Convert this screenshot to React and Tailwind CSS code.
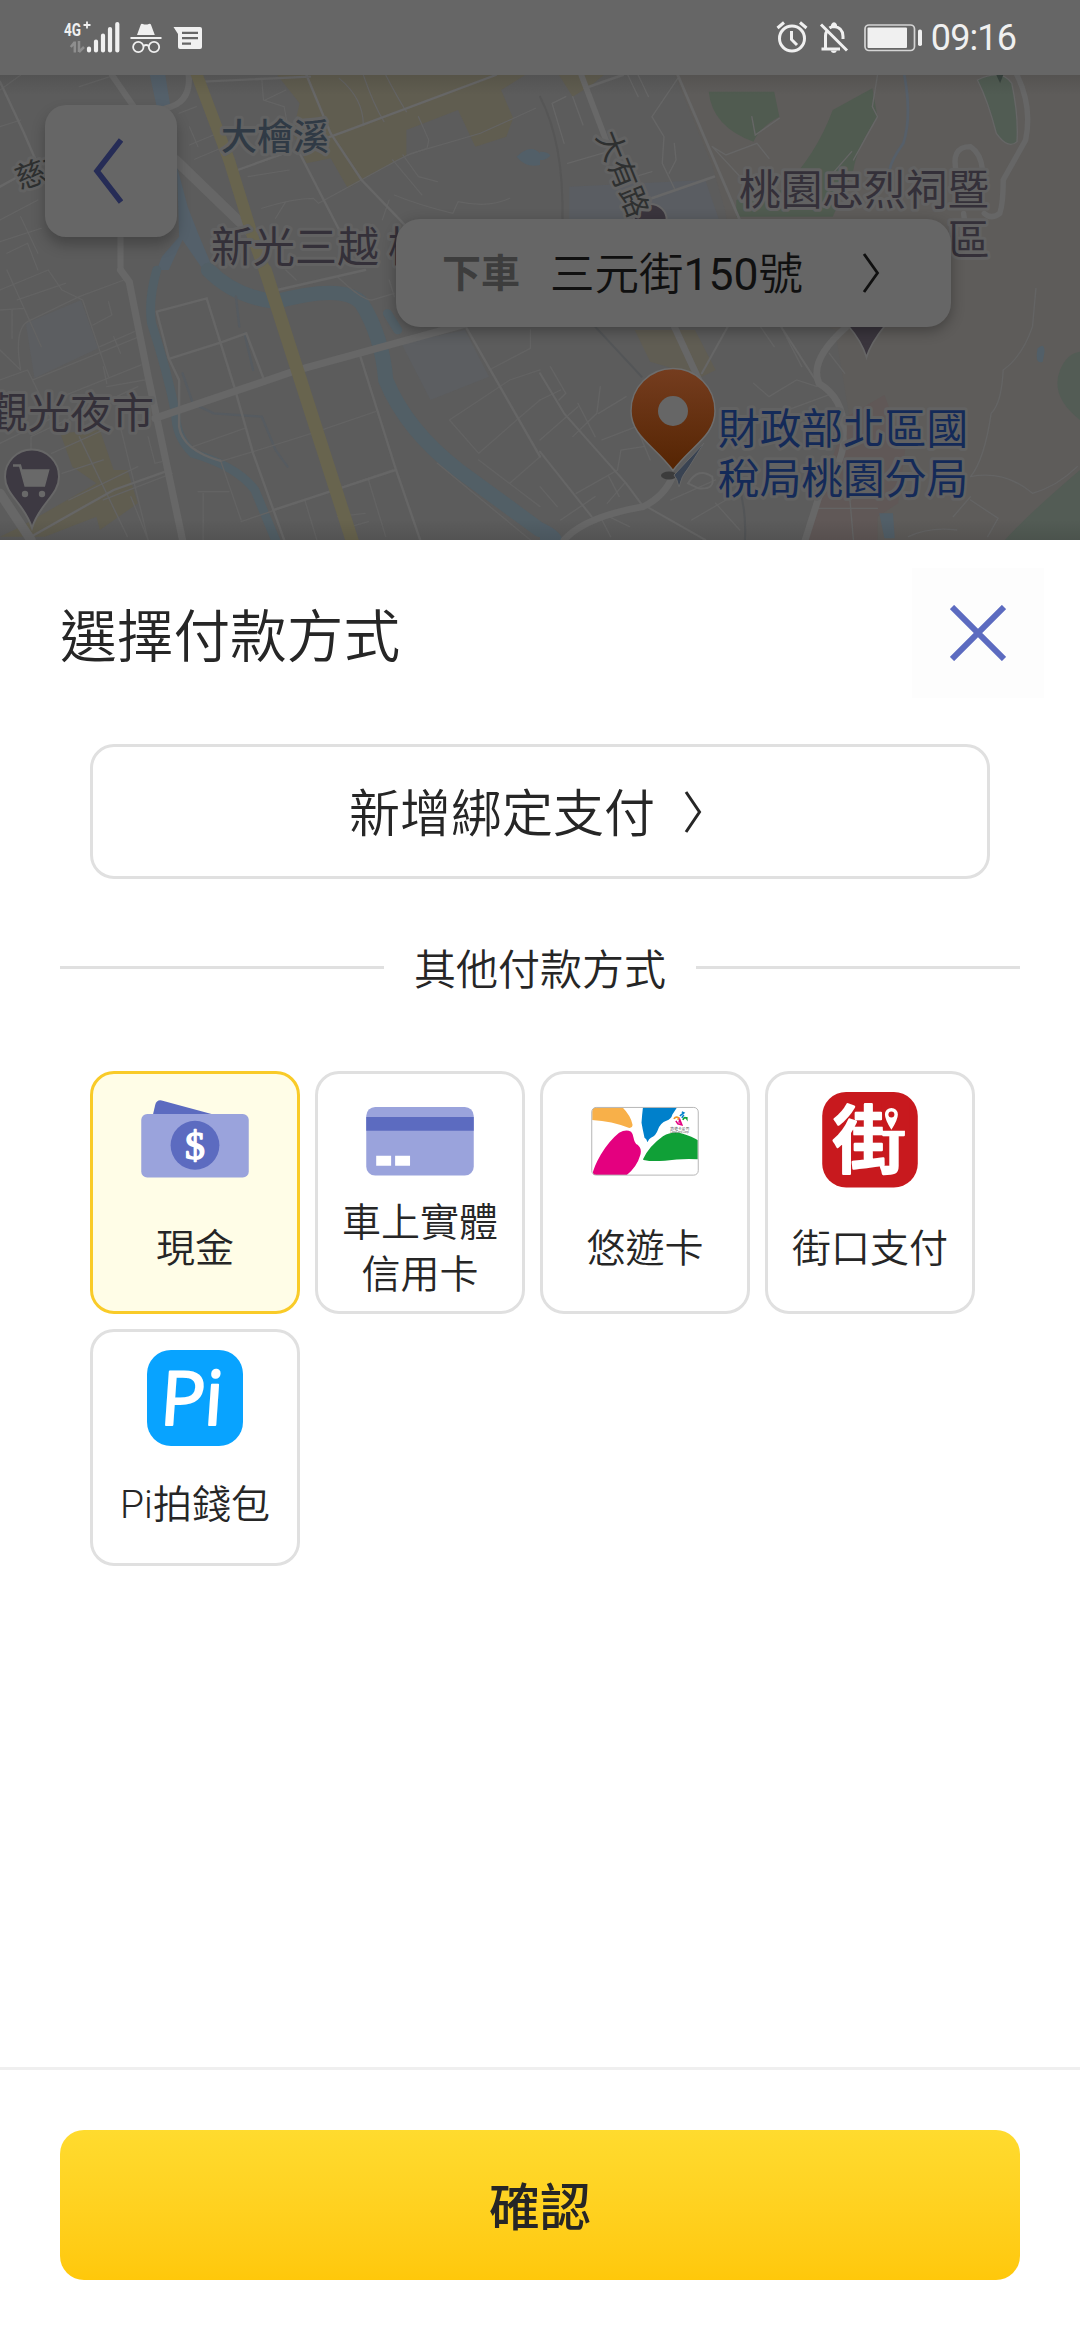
import React from "react";

const FONT = "font-['Roboto','Noto_Sans_CJK_TC',sans-serif]";

function StatusBar() {
    return (
        <div className="flex h-[75px] items-center justify-between bg-[#666666] pr-[64px] pl-[62px] text-[#f0f0f0]">
            <svg width="142" height="75" viewBox="62 0 142 75">
                <text x="64" y="35.5" fontSize="19" fontWeight="700" textLength="17" lengthAdjust="spacingAndGlyphs" fill="#f0f0f0">4G</text>
                <path d="M83.5 25h7M87 21.5v7" stroke="#f0f0f0" strokeWidth="1.8" />
                <path d="M74.800 41.500v11M74.800 42l-4 5M79 41v11M79 52l5-5" fill="none" stroke="#8e8e8e" strokeWidth="2.500" />
                <path d="M89 48.500v2M96 41.500v9M103 35.500v15M110 29v21.500M117.300 24v26.500" stroke="#f0f0f0" strokeWidth="4.200" strokeLinecap="round" />
                {/* Incógnito */}
                <path d="M137 35l3.800-10.500q.6-1.200 2-.6 3 1 6 0 1.500-.6 2.100.6L154.800 35z" fill="#f0f0f0" />
                <path d="M130.500 38h31" stroke="#f0f0f0" strokeWidth="2" />
                <g fill="none" stroke="#f0f0f0" strokeWidth="1.800">
                    <circle cx="138.300" cy="47" r="5.200" />
                    <circle cx="154" cy="47" r="5.200" />
                    <path d="M143.500 46q2.600-2 5.200 0" />
                </g>
                {/* Mensaje */}
                <path d="M173.500 27H200q2 0 2 2v18q0 2-2 2h-20q-2 0-2-2V34z" fill="#f0f0f0" />
                <path d="M182 32.800h16M182 38.200h16M182 43.600h9" stroke="#666" strokeWidth="2.200" />
            </svg>
            <div className="flex items-center">
                <svg width="148" height="75" viewBox="776 0 148 75">
                    <g fill="none" stroke="#f0f0f0" strokeWidth="3">
                        <circle cx="792" cy="38.500" r="12.500" />
                        <path d="M791.500 31v8.500l5.500 5.500M777.500 28l6.500-5.500M806.500 28l-6.500-5.500" />
                        <path d="M821 24.500l26 26M821.500 49H840M825.500 48V36q0-3 1.500-5M829.500 28q2-1.500 4.500-1.500 9 1 9 10v2.500" />
                    </g>
                    <path d="M831 27.500v-3q3-4.500 6 0v3z" fill="#f0f0f0" />
                    <path d="M830.500 50.500h6.500q-1 2.500-3.200 2.500t-3.300-2.500z" fill="#f0f0f0" />
                    <rect x="865" y="25" width="49.500" height="25.500" rx="4" fill="none" stroke="#d4d4d4" strokeWidth="1.700" />
                    <rect x="867.500" y="27.500" width="39.500" height="20.500" rx="1" fill="#f0f0f0" />
                    <rect x="918" y="29.500" width="4" height="16.500" rx="1.800" fill="#f0f0f0" />
                </svg>
                <span className="ml-[7px] pt-[1px] text-[36px] leading-none font-normal tracking-[-0.9px]">09:16</span>
            </div>
        </div>
    );
}

const halo = { paintOrder: "stroke", strokeLinejoin: "round" };

function MapView() {
    return (
        <svg width="1080" height="465" viewBox="0 75 1080 465" className="block">
            <defs>
                <linearGradient id="pin" x1="0" y1="0" x2="0" y2="1">
                    <stop offset="0" stopColor="#753d1f" />
                    <stop offset="1" stopColor="#552402" />
                </linearGradient>
                <linearGradient id="fade" x1="0" y1="0" x2="0" y2="1">
                    <stop offset="0" stopColor="#000" stopOpacity="0.1" />
                    <stop offset="1" stopColor="#000" stopOpacity="0" />
                </linearGradient>
            </defs>
            <rect y="75" width="1080" height="465" fill="#5c5c5c" />
            {/* Zona montañosa */}
            <path d="M675 75H1080V540H805L850 420 835 330 740 290 725 210 712 165z" fill="#5e5c5a" />

            {/* Cuadrante superior izquierdo */}
            <g transform="scale(.3444 .3333)" fill="none" strokeLinecap="round">
                <path d="M805 225H1525L1455 270 1490 355 1470 410 1380 440 1330 330 1180 390 1180 465 1010 565 960 475 890 490 850 400 870 310z" fill="#605d50" />
                <path d="M435 225H480L495 320H455zM514 500L545 620 575 700 620 810H590L530 720 490 810H455L470 770 520 710z" fill="#54606a" />
                <path d="M1500 470q40-40 68-10v35q-40 10-68-25z" fill="#525f68" />
                <g stroke="#646464" strokeWidth="3.500">
                    <path d="M1120 225q35 70 60 110M1055 225q30 90 60 140M985 235q70 60 70 140M760 235l5 65 60 20 10 55M770 300l60-30M520 340l50-20M550 435l70-30M550 380l25 60M565 478l110-48M1170 465l45 65 55 15M1140 480l85 105M1215 350l30 70-5 25-60 22" />
                    <path d="M0 380L60 360M230 260l90-30M0 270L60 225M0 660l110-60M0 725l120-40M60 650l50 110M20 760l60-30 30 80M690 510l140-50M720 530l120-20M760 625q90-30 150-30l15 15 230-130 40-20 200-60 160-75M1145 585q70 30 170 55l15-35q90 20 150-10M800 655l30-50M1110 660l20-60" />
                </g>
                <path d="M0 245L70 400 120 520M0 560L70 520M590 245L900 230M690 510L1000 395 1440 225M890 225L960 400 1050 540 1180 680M865 450L985 690" stroke="#676767" strokeWidth="7" />
                <path d="M325 225L395 330M548 225Q555 310 480 325M350 700V810" stroke="#676767" strokeWidth="18" />
                <path d="M510 480L730 700" stroke="#666666" strokeWidth="30" />
                <path d="M570 220L665 480 740 730 775 830" stroke="#68644e" strokeWidth="34" />
            </g>

            {/* Cuadrante superior derecho */}
            <g transform="translate(540 0) scale(.3444 .3333)" fill="none" strokeLinecap="round">
                <path d="M55 225H185L150 255 95 290z" fill="#605d50" />
                <path d="M85 560L480 540 520 660H85z" fill="#5a5d62" />
                <path d="M490 275Q600 275 680 275L695 350Q640 380 620 425 500 380 490 275zM965 265L980 350Q920 440 910 510L850 650H570V600L700 570Q800 470 850 330z" fill="#505b50" />
                <path d="M1270 240Q1340 205 1370 250 1390 350 1385 425 1360 450 1325 400 1300 300 1270 240z" fill="#515c53" stroke="#666" strokeWidth="4" />
                <path d="M0 455q25 0 30 12-15 15-30 13z" fill="#525f68" />
                <path d="M1058 225Q1080 350 1055 430 1020 480 1015 510" stroke="#565f69" strokeWidth="8" />
                <g stroke="#666666" strokeWidth="4">
                    <path d="M35 310l40-20M35 310l35 120M95 290l30 85M255 225l30 65M285 225l30 65M400 235L325 350 360 410 355 490 390 565M390 430l5 50-20 40M80 490l150-45M245 540l80-25M500 440l40 25 90-35 35 45M695 355l-70 50-10-55M980 225L965 320 980 350 910 480M905 455L850 520M500 440L590 540" />
                </g>
                <path d="M0 290Q70 430 65 660" stroke="#565656" strokeWidth="6" />
                <path d="M400 225L580 660M130 265L240 225M310 600L505 530" stroke="#676767" strokeWidth="8" />
                <path d="M120 225L195 430" stroke="#686868" strokeWidth="17" />
                <path d="M1385 225Q1430 320 1410 420L1345 540Q1345 610 1335 640 1310 660 1290 640M1210 520Q1190 440 1250 440 1280 460 1285 510M1230 640L1235 680" stroke="#666" strokeWidth="16" />
                <path d="M1325 225h20l-9 25z" fill="#39443f" />
                <circle cx="320" cy="660" r="48" fill="#3a353d" stroke="#666" strokeWidth="6" />
            </g>

            {/* Cuadrante inferior izquierdo */}
            <g transform="translate(0 270) scale(.3444 .3333)" fill="none" strokeLinecap="round">
                <path d="M75 160L235 90 285 235 100 325zM1165 220L1350 180 1420 320 1250 390z" fill="#5c5e61" />
                <path d="M175 490L290 480 330 600 370 600 400 700 290 780 280 740 130 800H0L60 770 280 640 210 590z" fill="#605d50" />
                <g stroke="#525f66">
                    <path d="M455 0Q430 90 440 160 485 300 510 430 510 500 560 550 690 590 740 660L800 810" strokeWidth="26" />
                    <path d="M605 0Q680 80 800 95 1000 40 1050 100 1110 200 1120 330 1180 480 1330 600L1568 780" strokeWidth="44" />
                    <path d="M1125 130l30 50" strokeWidth="26" />
                    <path d="M685 80L695 170M710 190L735 300M530 310L560 400 620 430 760 440 800 540 835 590" stroke="#565b60" strokeWidth="7" />
                </g>
                <g stroke="#636363" strokeWidth="4">
                    <path d="M0 60L140 0M20 0L120 230M140 0L180 60 240 90 315 320M50 90L190 40M0 120l70-5M35 120v85M60 300Q40 180 80 155L230 80 360 30M270 165l55-30-10-40M290 230L390 185M330 200l20 50M95 330l310-130M0 240l60 60M0 330l80-30L170 490M180 380l230-95M300 290l10 50M0 520L180 430M90 550V500L400 350M310 350l110-20M340 430l90 380M430 500l20 80 20-5M150 550L300 480M230 500L370 800M180 610l120-40M200 690l200-100M300 690l200-80M380 680L430 810M560 530L710 475M645 573L735 545 905 490 1090 425M640 570L700 750M575 665H665M590 670V810M700 755L1140 600M885 690L920 810M1070 630L1120 800M980 740l80-10M1000 775l70-20" />
                    <path d="M830 0l30 30M980 20Q1050 90 1080 90L1145 70M1130 30l15 50M1305 450L1480 330 1568 300M1305 450L1390 550 1500 450 1568 390M1390 570L1568 710M1480 640L1568 560M1420 300L1540 235V180M1270 580L1540 810" />
                </g>
                <path d="M495 265L640 218 715 190 765 325M455 125L600 85 680 350 735 550 825 810M455 125L490 265 520 330V470Q530 540 640 573M1045 255L1150 600 1220 810M795 720L1150 600M805 60L1060 0M1355 175L1568 560M90 800L330 660 480 605" stroke="#666666" strokeWidth="7" />
                <path d="M350 0L375 35 430 320 530 810" stroke="#676767" strokeWidth="21" />
                <path d="M450 445L850 305M865 300L1360 160" stroke="#676767" strokeWidth="22" />
                <path d="M0 670L90 810" stroke="#676767" strokeWidth="28" />
                <path d="M770 0L1025 820" stroke="#68644e" strokeWidth="38" />
            </g>

            {/* Cuadrante inferior derecho */}
            <g transform="translate(540 270) scale(.3444 .3333)" fill="none" strokeLinecap="round">
                <path d="M275 180H450L510 300 470 320 320 275z" fill="#605d53" />
                <path d="M890 440L1000 375 1060 540 1040 700 980 740V810H770L850 560z" fill="#605857" />
                <path d="M1568 245V450Q1480 380 1510 300 1530 250 1568 245zM1350 810Q1420 730 1568 600V810z" fill="#535c55" />
                <path d="M0 755Q60 780 65 810H0zM985 730h40l5 75h-30zM1445 235q20-20 20 10l-5 30q-25 10-15-40z" fill="#525f68" />
                <g stroke="#646464" strokeWidth="4">
                    <path d="M0 390l60-30M30 290l45 80-20 20M0 510l110-100M110 400l50 100M175 350l-10 80-70 70M180 510l100-40 40 100M250 380l-80 50M300 530l-65 10-10 60-120 70M60 750L160 680M195 700L245 640M200 620l30 60M0 650L50 710M260 770L200 740M175 740l30 60M440 750l100-60M380 690l130-60M510 700l70 80M700 170L760 290M640 170l40 60M620 340l45 40 80-50 60 20M720 420l130-50M840 250l45 60M1440 55L1430 170Q1400 260 1345 300 1340 400 1310 430 1290 570 1250 620M1250 620Q1350 600 1430 670 1500 650 1560 590M1250 690L1330 745 1300 800M1200 740l50-60M1070 800q60-30 140-20M800 715h180M900 690l10 120" />
                </g>
                <path d="M160 170L295 320M575 640Q600 720 595 810" stroke="#535557" strokeWidth="6" />
                <path d="M0 310L70 430 250 640 300 710M0 545L150 740M545 170L470 310M310 710L480 810M700 170L800 330M430 640q30-50 70-20 10 40-40 35z" stroke="#666666" strokeWidth="6" />
                <path d="M390 170L475 360M70 810Q130 740 300 710 360 680 385 620M890 170Q780 270 810 340 890 390 880 500 890 560 810 680L770 810" stroke="#676767" strokeWidth="20" />
                <path d="M893 165h110Q960 220 948 262 935 215 893 165z" fill="#3a353d" stroke="#666" strokeWidth="5" />
            </g>

            {/* Etiquetas */}
            <g stroke="#626262" strokeWidth="6" fill="#343039" fontWeight="400">
                <text x="221" y="150" fontSize="36" fontWeight="500" fill="#303a45" style={halo}>大檜溪</text>
                <text x="211" y="262" fontSize="42" style={halo}>新光三越</text>
                <text x="388" y="262" fontSize="42" style={halo}>桃</text>
                <text x="739" y="205" fontSize="41.700" style={halo}>桃園忠烈祠暨</text>
                <text x="948" y="255" fontSize="41.700" style={halo}>區</text>
                <text x="-14" y="428" fontSize="42" style={halo}>觀光夜市</text>
                <g fill="#142a58">
                    <text x="718" y="444" fontSize="41.700" style={halo}>財政部北區國</text>
                    <text x="718" y="494" fontSize="41.700" style={halo}>稅局桃園分局</text>
                </g>
                <g fill="#2e3030" fontSize="30">
                    <text transform="translate(20 190) rotate(-20)" style={halo}>慈文</text>
                    <text transform="translate(596 136) rotate(68)" style={halo}>大有路</text>
                </g>
            </g>

            {/* Marcador del mercado */}
            <path d="M32 449.500a27 27 0 0 1 27 27.500c0 18-20 27-27 51-7-24-27-33-27-51a27 27 0 0 1 27-27.500z" fill="#3d3942" stroke="#676767" strokeWidth="2" />
            <path d="M13 465.500h7l5.500 20h18.500l4-15H21.500M27 484.500h17" fill="none" stroke="#696969" strokeWidth="2.500" />
            <path d="M21 470h27l-3.500 15h-19z" fill="#696969" />
            <circle cx="25" cy="494" r="3.200" fill="#696969" />
            <circle cx="42" cy="494" r="3.200" fill="#696969" />

            {/* Destino */}
            <ellipse cx="669" cy="475.500" rx="8" ry="4" fill="#3c3c3c" />
            <path d="M704 443l-15 24q-8 9-10 20-2-9-5-12z" fill="#394352" stroke="#666" strokeWidth="1" />
            <path d="M673 368.500a42 42 0 0 1 42 42.500c0 25-24 35-42 59.500-18-24.500-42-34.500-42-59.500a42 42 0 0 1 42-42.500z" fill="url(#pin)" stroke="#6d6d6d" strokeWidth="1.500" />
            <circle cx="673" cy="411" r="15" fill="#666" />
            <rect y="75" width="1080" height="20" fill="url(#fade)" />
            <rect y="-540" width="1080" height="20" fill="url(#fade)" transform="scale(1 -1)" />
        </svg>
    );
}

function MapHeader() {
    return (
        <div className="relative h-[465px] overflow-hidden">
            <MapView />
            <button className="absolute top-[30px] left-[45px] flex h-[132px] w-[132px] items-center justify-center rounded-[21px] bg-[#666666] shadow-[0_8px_14px_rgba(0,0,0,0.25)]">
                <svg width="30" height="66" viewBox="0 0 30 66" className="-ml-[6px]">
                    <path d="M28 2L4 33l24 31" fill="none" stroke="#262c56" strokeWidth="5.500" />
                </svg>
            </button>
            <div className="absolute top-[144px] left-[396px] flex h-[108px] w-[555px] items-center rounded-3xl bg-[#666666] pl-[46px] shadow-[0_4px_14px_rgba(0,0,0,0.3)]">
                <span className="w-[108px] pt-[2px] text-[39px] font-bold leading-none text-[#3d3d3d]">下車</span>
                <span className="w-[312px] pt-[4px] text-[44.5px] leading-none text-[#101010]">
                    三元街<span className="font-normal">150</span>號
                </span>
                <svg width="18" height="40" viewBox="0 0 18 40">
                    <path d="M2 1l13.500 19L2 39" fill="none" stroke="#101010" strokeWidth="2.800" />
                </svg>
            </div>
        </div>
    );
}

function CashIcon() {
    return (
        <svg width="108" height="96" viewBox="0 0 108 96">
            <path d="M11 26l3-13q1.500-5.500 6.500-4.500L78 24z" fill="#5c6bc0" />
            <rect y="22" width="108" height="64" rx="6" fill="#9aa3dc" />
            <circle cx="54" cy="53.500" r="24.500" fill="#5c6bc0" />
            <text x="54" y="67" textAnchor="middle" fontSize="40" fontWeight="400" fill="#fff" stroke="#fff" strokeWidth="1.500" strokeLinejoin="round" className="font-['Liberation_Serif',serif]">$</text>
        </svg>
    );
}

function CardIcon() {
    return (
        <svg width="108" height="96" viewBox="0 0 108 96">
            <rect y="15" width="108" height="69" rx="9" fill="#9aa3dc" />
            <path d="M0 25h108v14H0z" fill="#5c6bc0" />
            <path d="M10 64h15v10H10zM29 64h15v10H29z" fill="#fff" />
        </svg>
    );
}

function EasyCardIcon() {
    return (
        <svg width="108" height="96" viewBox="0 0 108 96">
            <clipPath id="easy">
                <rect x="1" y="15.500" width="106" height="68" rx="4" />
            </clipPath>
            <g clipPath="url(#easy)">
                <path d="M0 15h31q9 9 10.500 18 0 3.500-4 3Q21 29 0 28z" fill="#f8b049" />
                <path d="M52 15h34.500l-5 7.500q-1 4.500-6 6.500-6 2-8.500 9-2 6-7 8-2 1-3.500 4.500-1-3.500-3-4.500-2-9-3-15 .5-8 1.500-16z" fill="#0080cb" />
                <path d="M1 84q1-8 8.500-21Q18 49 28 41q7-4 12-1 2 2 2.500 6 1 6 4 7 5 4 2.500 11Q46 75 35 84z" fill="#e4007f" />
                <path d="M52 67.500q6-13 20-23 10-6 20-2.500 10 3 16 7v18.500q-18-1-34 1.500-14 1-20-.5-2 0-2-1z" fill="#10a037" />
                <g fill="none" strokeWidth="1.600">
                    <path d="M83 27q2-3 5-1l-1 2" stroke="#f0962c" />
                    <path d="M89 24l4-3-2-1M91 26l2-3" stroke="#0080cb" />
                    <path d="M92 28q2-4 4-1v-2" stroke="#10a037" />
                    <path d="M85 29l2 3 4 1-2-5-1 3" stroke="#e4007f" />
                </g>
                <text x="79.500" y="38" fontSize="3.600" textLength="19" fill="#333">悠遊卡公司</text>
                <text x="79.500" y="41.500" fontSize="3" textLength="19" fill="#333">EasyCard Corp.</text>
            </g>
            <rect x=".5" y="15.500" width="107" height="68" rx="4.500" fill="none" stroke="#b5b5b5" />
        </svg>
    );
}

function JkoIcon() {
    return (
        <svg width="96" height="96" viewBox="0 0 96 96">
            <rect width="96" height="96" rx="24" fill="#c8191e" />
            <text x="10.500" y="75" fontSize="74" fontWeight="500" fill="#fff" stroke="#fff" strokeWidth="2.500" strokeLinejoin="round">街</text>
            <path d="M59.500 10H88v29H61z" fill="#c8191e" />
            <path d="M69.500 16a6.500 6.500 0 0 1 6.500 6.500q0 5-6.500 15.500-6.500-10.500-6.500-15.500a6.500 6.500 0 0 1 6.500-6.500z" fill="#fff" />
            <circle cx="69.500" cy="22.500" r="3" fill="#c8191e" />
        </svg>
    );
}

function PiIcon() {
    return (
        <svg width="96" height="96" viewBox="0 0 96 96">
            <rect width="96" height="96" rx="24" fill="#08a3ff" />
            <text y="75" transform="skewX(-4)" fontSize="75" fontWeight="500" fill="#fff" stroke="#fff" strokeWidth="2" strokeLinejoin="round" className="font-['Open_Sans',sans-serif]">
                <tspan x="17">P</tspan>
                <tspan x="61">i</tspan>
            </text>
        </svg>
    );
}

const methods = [
    { label: "現金", Icon: CashIcon, selected: true },
    { label: "車上實體\n信用卡", Icon: CardIcon },
    { label: "悠遊卡", Icon: EasyCardIcon },
    { label: "街口支付", Icon: JkoIcon },
    { label: "Pi拍錢包", Icon: PiIcon, short: true },
];

function MethodCard({ label, Icon, selected, short }) {
    return (
        <button
            className={`flex w-[210px] flex-col items-center rounded-3xl border-[3px] pt-[18px] ${
                selected ? "border-[#f9cb28] bg-[#fffde7]" : "border-[#e0e0e0] bg-white"
            } ${short ? "h-[237px]" : "h-[243px]"}`}
        >
            <Icon />
            <span
                className={`flex items-center justify-center text-[39px] leading-[52px] whitespace-pre-line text-[#262626] ${
                    short ? "h-[117px]" : "h-[124px]"
                }`}
            >
                {label}
            </span>
        </button>
    );
}

export default function App() {
    return (
        <div className={`flex h-[2340px] w-[1080px] flex-col bg-white font-[350] text-[#262626] ${FONT}`}>
            <StatusBar />
            <MapHeader />

            {/* Título */}
            <div className="flex h-[204px] items-start justify-between pr-[36px] pl-[60px]">
                <h1 className="mt-[69px] text-[56.7px] leading-[57px]">選擇付款方式</h1>
                <button className="mt-[28px] flex h-[130px] w-[132px] items-center justify-center bg-[#fdfdfd]">
                    <svg width="56" height="56" viewBox="0 0 56 56">
                        <path d="M2 2l52 52M54 2L2 54" stroke="#5c6bc0" strokeWidth="6" />
                    </svg>
                </button>
            </div>

            <button className="mx-[90px] flex h-[135px] shrink-0 items-center rounded-3xl border-[3px] border-[#e0e0e0] pl-[256px]">
                <span className="w-[335px] pt-[5px] text-left text-[51px] leading-none">新增綁定支付</span>
                <svg width="18" height="42" viewBox="0 0 18 42">
                    <path d="M2 1l13.500 20L2 41" fill="none" stroke="#262626" strokeWidth="3" />
                </svg>
            </button>

            {/* Separador */}
            <div className="mx-[60px] mt-[57px] flex h-[63px] items-center">
                <div className="h-[3px] flex-1 bg-[#e0e0e0]" />
                <span className="w-[312px] pt-[6px] text-center text-[42px] leading-none">其他付款方式</span>
                <div className="h-[3px] flex-1 bg-[#e0e0e0]" />
            </div>

            <div className="mt-[72px] flex flex-wrap gap-[15px] px-[90px]">
                {methods.map((method) => (
                    <MethodCard key={method.label} {...method} />
                ))}
            </div>

            <div className="mt-auto h-[273px] border-t-[3px] border-[#efefef] px-[60px] pt-[60px]">
                <button className="h-[150px] w-full rounded-3xl bg-linear-to-b from-[#ffdb2e] to-[#ffc80a] pt-[9px] text-[51px] font-medium">
                    確認
                </button>
            </div>
        </div>
    );
}
